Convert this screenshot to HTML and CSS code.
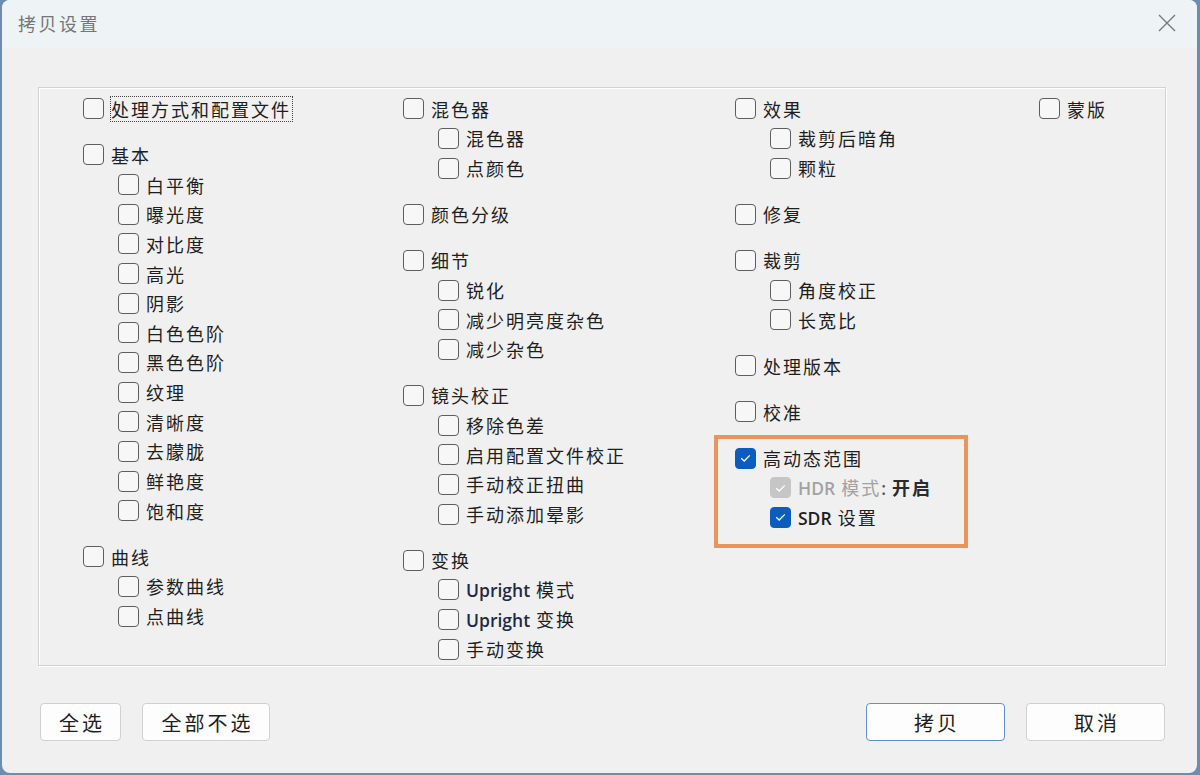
FILE: index.html
```html
<!DOCTYPE html>
<html lang="zh-CN">
<head>
<meta charset="utf-8">
<link rel="stylesheet" href="styles.css">
</head>
<body>
<div class="window">
  <div class="titlebar">
    <span class="title">拷贝设置</span>
    <svg class="close" width="20" height="20" viewBox="0 0 20 20"><path d="M2 2 L18 18 M18 2 L2 18" stroke="#7a7a7a" stroke-width="1.4" fill="none"/></svg>
  </div>
  <div class="groupbox">
    <div class="col c1">
      <div class="grp">
        <div class="item"><span class="cb"></span><span class="lbl focus">处理方式和配置文件</span></div>
      </div>
      <div class="grp">
        <div class="item"><span class="cb"></span><span class="lbl">基本</span></div>
        <div class="item sub"><span class="cb"></span><span class="lbl">白平衡</span></div>
        <div class="item sub"><span class="cb"></span><span class="lbl">曝光度</span></div>
        <div class="item sub"><span class="cb"></span><span class="lbl">对比度</span></div>
        <div class="item sub"><span class="cb"></span><span class="lbl">高光</span></div>
        <div class="item sub"><span class="cb"></span><span class="lbl">阴影</span></div>
        <div class="item sub"><span class="cb"></span><span class="lbl">白色色阶</span></div>
        <div class="item sub"><span class="cb"></span><span class="lbl">黑色色阶</span></div>
        <div class="item sub"><span class="cb"></span><span class="lbl">纹理</span></div>
        <div class="item sub"><span class="cb"></span><span class="lbl">清晰度</span></div>
        <div class="item sub"><span class="cb"></span><span class="lbl">去朦胧</span></div>
        <div class="item sub"><span class="cb"></span><span class="lbl">鲜艳度</span></div>
        <div class="item sub"><span class="cb"></span><span class="lbl">饱和度</span></div>
      </div>
      <div class="grp">
        <div class="item"><span class="cb"></span><span class="lbl">曲线</span></div>
        <div class="item sub"><span class="cb"></span><span class="lbl">参数曲线</span></div>
        <div class="item sub"><span class="cb"></span><span class="lbl">点曲线</span></div>
      </div>
    </div>
    <div class="col c2">
      <div class="grp">
        <div class="item"><span class="cb"></span><span class="lbl">混色器</span></div>
        <div class="item sub"><span class="cb"></span><span class="lbl">混色器</span></div>
        <div class="item sub"><span class="cb"></span><span class="lbl">点颜色</span></div>
      </div>
      <div class="grp">
        <div class="item"><span class="cb"></span><span class="lbl">颜色分级</span></div>
      </div>
      <div class="grp">
        <div class="item"><span class="cb"></span><span class="lbl">细节</span></div>
        <div class="item sub"><span class="cb"></span><span class="lbl">锐化</span></div>
        <div class="item sub"><span class="cb"></span><span class="lbl">减少明亮度杂色</span></div>
        <div class="item sub"><span class="cb"></span><span class="lbl">减少杂色</span></div>
      </div>
      <div class="grp">
        <div class="item"><span class="cb"></span><span class="lbl">镜头校正</span></div>
        <div class="item sub"><span class="cb"></span><span class="lbl">移除色差</span></div>
        <div class="item sub"><span class="cb"></span><span class="lbl">启用配置文件校正</span></div>
        <div class="item sub"><span class="cb"></span><span class="lbl">手动校正扭曲</span></div>
        <div class="item sub"><span class="cb"></span><span class="lbl">手动添加晕影</span></div>
      </div>
      <div class="grp">
        <div class="item"><span class="cb"></span><span class="lbl">变换</span></div>
        <div class="item sub"><span class="cb"></span><span class="lbl"><span class="lat up">Upright</span> 模式</span></div>
        <div class="item sub"><span class="cb"></span><span class="lbl"><span class="lat up">Upright</span> 变换</span></div>
        <div class="item sub"><span class="cb"></span><span class="lbl">手动变换</span></div>
      </div>
    </div>
    <div class="col c3">
      <div class="grp">
        <div class="item"><span class="cb"></span><span class="lbl">效果</span></div>
        <div class="item sub"><span class="cb"></span><span class="lbl">裁剪后暗角</span></div>
        <div class="item sub"><span class="cb"></span><span class="lbl">颗粒</span></div>
      </div>
      <div class="grp">
        <div class="item"><span class="cb"></span><span class="lbl">修复</span></div>
      </div>
      <div class="grp">
        <div class="item"><span class="cb"></span><span class="lbl">裁剪</span></div>
        <div class="item sub"><span class="cb"></span><span class="lbl">角度校正</span></div>
        <div class="item sub"><span class="cb"></span><span class="lbl">长宽比</span></div>
      </div>
      <div class="grp">
        <div class="item"><span class="cb"></span><span class="lbl">处理版本</span></div>
      </div>
      <div class="grp">
        <div class="item"><span class="cb"></span><span class="lbl">校准</span></div>
      </div>
      <div class="grp hdr">
        <div class="hl"></div>
        <div class="item"><span class="cb on"><svg viewBox="0 0 20 20"><path d="M5.5 10.2 L8.6 13.2 L14.5 7.2" stroke="#fff" stroke-width="1.3" fill="none"/></svg></span><span class="lbl">高动态范围</span></div>
        <div class="item sub"><span class="cb dis"><svg viewBox="0 0 20 20"><path d="M5.5 10.2 L8.6 13.2 L14.5 7.2" stroke="#fff" stroke-width="1.3" fill="none"/></svg></span><span class="lbl grey"><span class="lat">HDR</span> 模式<span class="lat colon">:</span><b class="on-txt">开启</b></span></div>
        <div class="item sub"><span class="cb on"><svg viewBox="0 0 20 20"><path d="M5.5 10.2 L8.6 13.2 L14.5 7.2" stroke="#fff" stroke-width="1.3" fill="none"/></svg></span><span class="lbl"><span class="lat">SDR</span> 设置</span></div>
      </div>
    </div>
    <div class="col c4">
      <div class="grp">
        <div class="item"><span class="cb"></span><span class="lbl">蒙版</span></div>
      </div>
    </div>
  </div>
  <div class="buttons">
    <div class="left">
      <button class="btn b1">全选</button>
      <button class="btn b2">全部不选</button>
    </div>
    <div class="right">
      <button class="btn b3 default">拷贝</button>
      <button class="btn b4">取消</button>
    </div>
  </div>
</div>
</body>
</html>
```

FILE: styles.css
```css
html, body {
  margin: 0;
  padding: 0;
}
body {
  width: 1200px;
  height: 775px;
  background: #6a8db0;
  font-family: "Noto Sans CJK SC", "Noto Sans", sans-serif;
  overflow: hidden;
}
.window {
  margin-left: 2px;
  width: 1195px;
  height: 773px;
  background: #f0f0f0;
  border-radius: 8px;
  overflow: hidden;
  display: flex;
  flex-direction: column;
}
.titlebar {
  height: 48px;
  flex: none;
  background: #eef3f6;
  display: flex;
  align-items: center;
  justify-content: space-between;
  padding: 0 20px 0 16px;
}
.title {
  font-size: 18px;
  letter-spacing: 2.5px;
  color: #767676;
  margin-top: -2px;
}
.close {
  width: 20px;
  height: 20px;
  margin-top: -2px;
}
.groupbox {
  margin: 39px 0 0 36px;
  border: 1px solid #d2d2d2;
  box-shadow: 1px 1px 0 #ffffff, inset 1px 1px 0 #ffffff;
  display: grid;
  grid-template-columns: 320px 332px 304px 1fr;
  padding: 6px 0 0 44px;
  flex: none;
  box-sizing: border-box;
  width: 1128px;
  height: 579px;
}
.col {
  display: flex;
  flex-direction: column;
  gap: 16.5px;
}
.grp {
  display: flex;
  flex-direction: column;
  position: relative;
}
.item {
  height: 29.65px;
  display: flex;
  align-items: center;
  font-size: 18px;
  color: #1e1e1e;
  letter-spacing: 2px;
  white-space: nowrap;
  position: relative;
}
.item.sub {
  padding-left: 35px;
}
.cb {
  width: 19px;
  height: 19px;
  border: 1px solid #5e5e5e;
  border-radius: 4px;
  background: #f7f7f7;
  flex: none;
  margin-right: 7px;
  display: flex;
  align-items: center;
  justify-content: center;
}
.cb svg {
  width: 20px;
  height: 20px;
}
.cb.on {
  background: #0a5cbf;
  border-color: #0a5cbf;
}
.cb.dis {
  background: #c6c6c6;
  border-color: #c6c6c6;
}
.lbl {
  line-height: 24px;
}
.focus {
  outline: 1px dotted #444;
  outline-offset: 0;
  padding-right: 1px;
}
.lat {
  font-family: "Open Sans", "Noto Sans", sans-serif;
  font-weight: 600;
  letter-spacing: 0;
  font-size: 17.5px;
}
.up {
  color: #1d2a45;
}
.grey {
  color: #a2a2a2;
}
.colon {
  color: #555;
  margin-right: 6px;
}
.on-txt {
  color: #2b2b2b;
  font-weight: 700;
}
.hdr .hl {
  position: absolute;
  left: -21px;
  top: -8px;
  width: 246px;
  height: 105px;
  border: 4px solid #e9955a;
}
.buttons {
  margin: 37px 32px 0 38px;
  display: flex;
  justify-content: space-between;
  flex: none;
}
.left, .right {
  display: flex;
  gap: 21px;
}
.btn {
  height: 38px;
  border: 1px solid #d0d0d0;
  border-radius: 4px;
  background: #fdfdfd;
  font-family: "Noto Sans CJK SC", sans-serif;
  font-size: 20px;
  letter-spacing: 3px;
  color: #1e1e1e;
  padding: 0;
  text-indent: 3px;
}
.b1 { width: 81px; }
.b2 { width: 128px; }
.b3 { width: 139px; }
.b4 { width: 139px; }
.default {
  border-color: #5f93cf;
}
```
